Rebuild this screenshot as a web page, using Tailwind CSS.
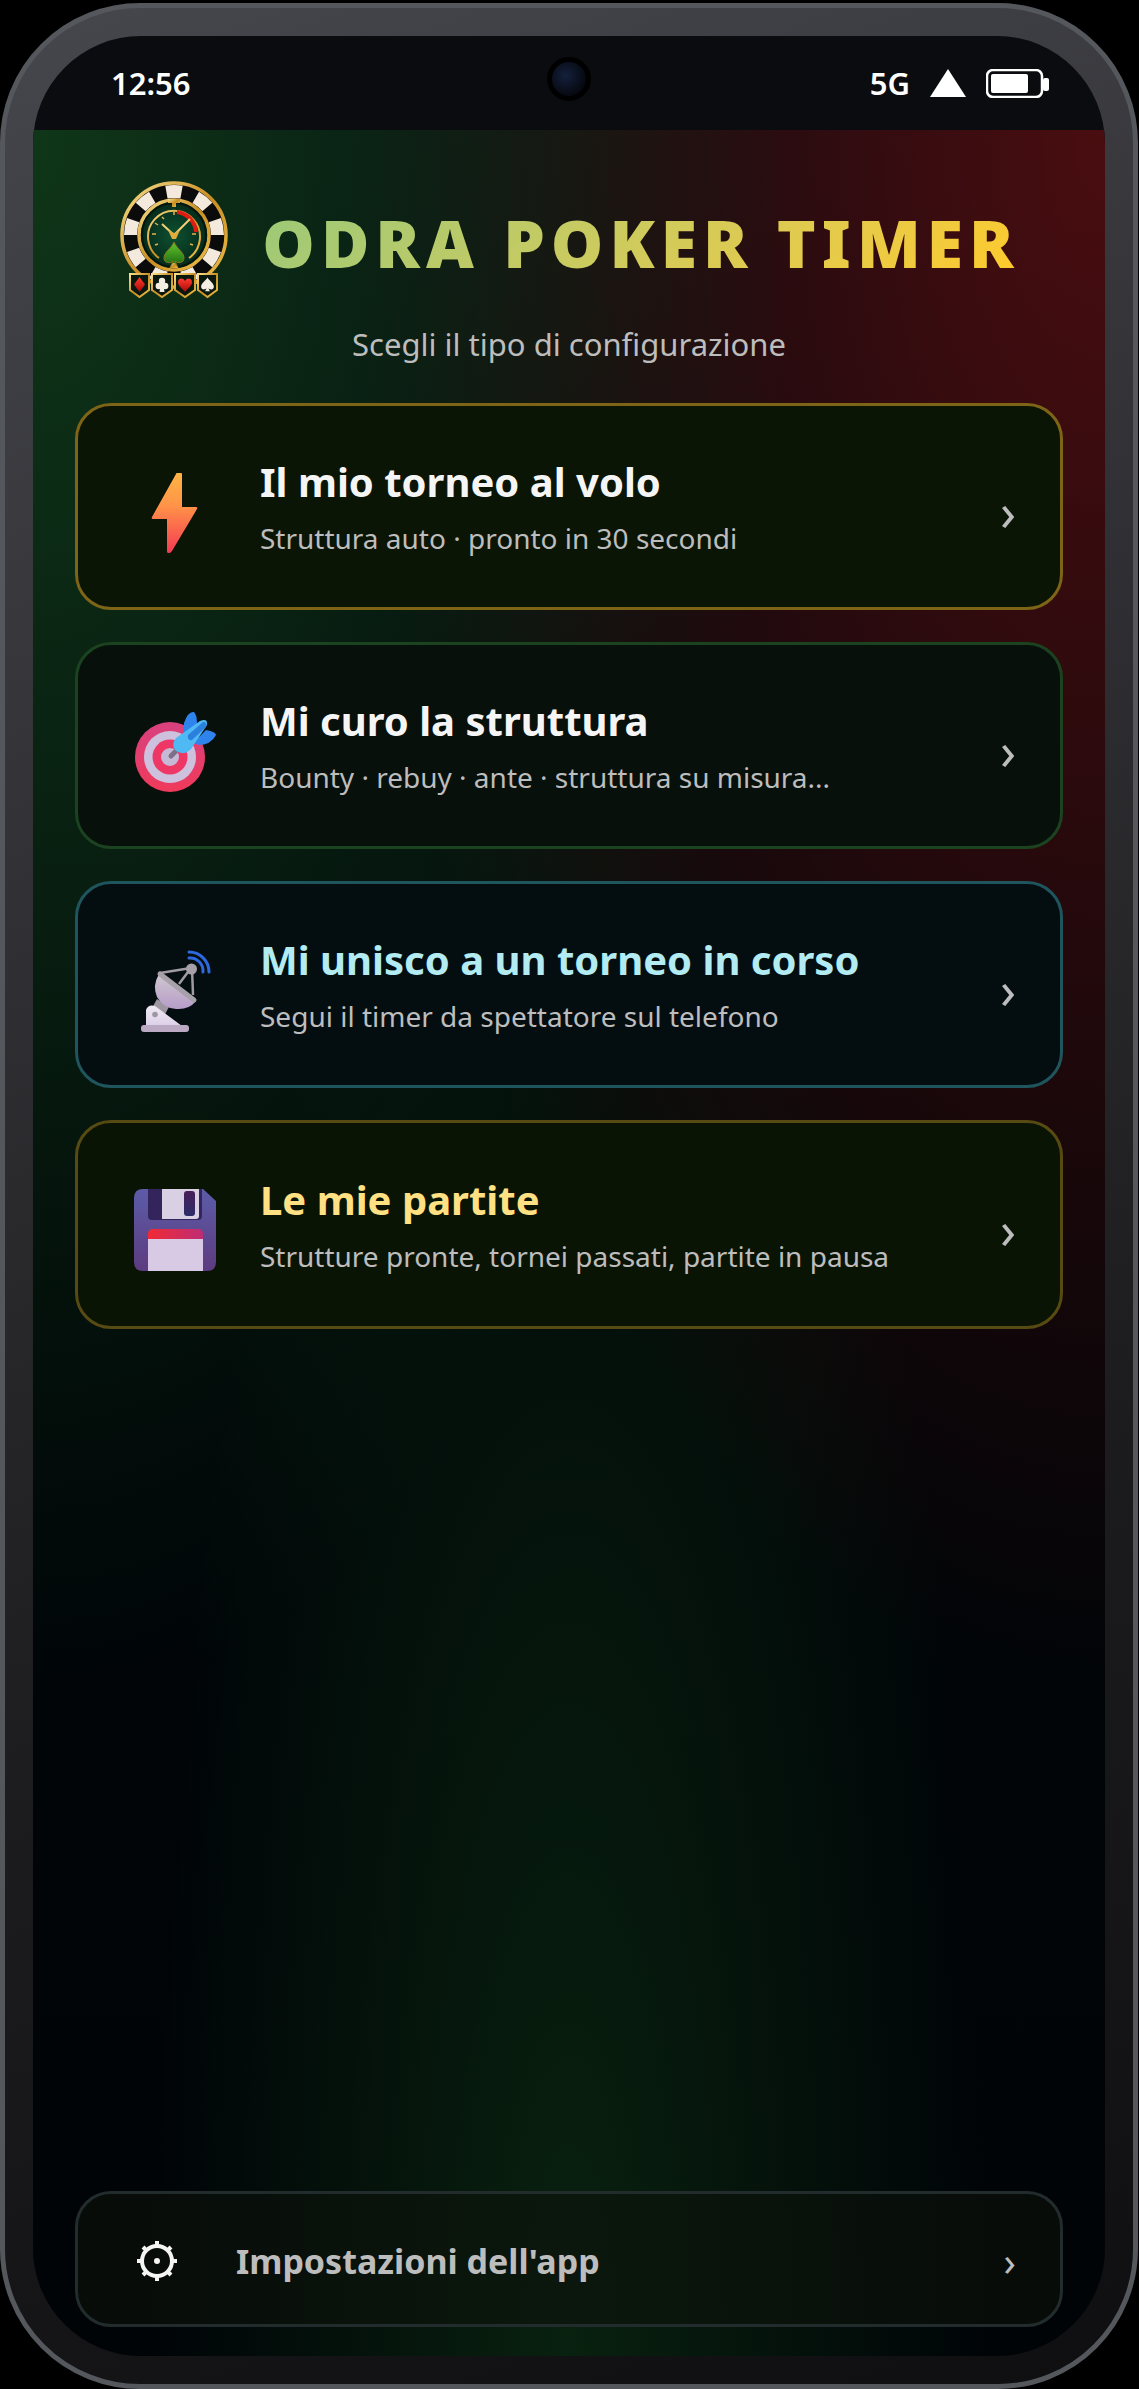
<!DOCTYPE html>
<html lang="it">
<head>
    <meta charset="UTF-8">
    <meta name="viewport" content="width=device-width, initial-scale=1.0">
    <title>Odra Poker Timer</title>
    <script src="https://cdn.jsdelivr.net/npm/@tailwindcss/browser@4"></script>
</head>
<body class="bg-black font-['Noto_Sans','Open_Sans',sans-serif] text-white">
    <div class="min-h-screen flex flex-col pt-[3px] pr-px">
        <!-- phone frame -->
        <div class="flex-1 flex flex-col border-[5px] border-[#54575c] rounded-[140px] bg-[linear-gradient(160deg,#45474c_0%,#3a3a3f_18%,#1c1c1e_65%,#0f0f11_100%)] p-7">
            <div class="flex-1 flex flex-col rounded-[108px] overflow-hidden bg-[#0a0c0f]">

                <!-- status bar -->
                <div class="relative h-[94px] shrink-0 flex items-center justify-between pl-[78px] pr-14 text-[31px] font-semibold">
                    <span>12:56</span>
                    <span class="absolute left-1/2 top-[21px] -translate-x-1/2 size-11 rounded-full border-[5px] border-black bg-[radial-gradient(circle_at_40%_40%,#14203c,#05070d_75%)]"></span>
                    <div class="flex items-center gap-5">
                        <span>5G</span>
                        <svg class="w-9 h-7" viewBox="0 0 36 28" fill="#fff"><path d="M18 0 36 28H0z"/></svg>
                        <svg class="w-[63px] h-[29px]" viewBox="0 0 63 29" fill="#fff">
                            <rect x="1" y="1" width="55" height="27" rx="6" fill="none" stroke="#fff" stroke-width="2.5"/>
                            <rect x="5" y="5" width="37" height="19" rx="2"/>
                            <rect x="57" y="9" width="6" height="13" rx="2"/>
                        </svg>
                    </div>
                </div>

                <main class="flex-1 flex flex-col px-[42px] pt-[49px] pb-[29px] bg-[radial-gradient(ellipse_at_0%_0%,rgba(27,94,32,0.53),transparent_50%),radial-gradient(ellipse_at_100%_0%,rgba(139,16,16,0.52),transparent_50%),radial-gradient(ellipse_at_50%_100%,rgba(27,94,32,0.32),transparent_55%),linear-gradient(180deg,#020a10,#000508_50%,#000407)]">
                    <header class="flex flex-col items-center">
                        <div class="flex items-center gap-8">
                            <svg class="w-[112px] h-[122px]" viewBox="0 0 112 122">
                                <defs>
                                    <linearGradient id="gold" x1="0" y1="0" x2="1" y2="1">
                                        <stop offset="0" stop-color="#f8df8c"/>
                                        <stop offset=".5" stop-color="#c98d22"/>
                                        <stop offset="1" stop-color="#f0bf4a"/>
                                    </linearGradient>
                                    <radialGradient id="felt"><stop offset="0" stop-color="#0d5030"/><stop offset="1" stop-color="#05281a"/></radialGradient>
                                    <linearGradient id="leaf" x1="0" y1="0" x2="0" y2="1"><stop offset="0" stop-color="#62c72c"/><stop offset="1" stop-color="#14600e"/></linearGradient>
                                    <linearGradient id="ruby" x1="0" y1="0" x2="0" y2="1"><stop offset="0" stop-color="#ff3a2c"/><stop offset="1" stop-color="#a80808"/></linearGradient>
                                    <path id="spade" d="M0-8C-2-4-8-1-8 3.500C-8 7-3.500 8-1 5L-3 9H3L1 5C3.500 8 8 7 8 3.500C8-1 2-4 0-8z"/>
                                </defs>
                                <circle cx="56" cy="56" r="52" fill="#0b0b0b" stroke="url(#gold)" stroke-width="3.500"/>
                                <circle cx="56" cy="56" r="43.500" fill="none" stroke="#f3e9dd" stroke-width="13" pathLength="360" stroke-dasharray="20 20" stroke-dashoffset="-20" transform="rotate(-120 56 56)"/>
                                <circle cx="56" cy="56" r="35" fill="url(#felt)" stroke="url(#gold)" stroke-width="3.500"/>
                                <circle cx="56" cy="56" r="32" fill="none" stroke="#04150d" stroke-width="2"/>
                                <path d="M50 20h12v4H50zM54 24h4v4h-4z" fill="url(#gold)"/>
                                <path d="M41 79A26 26 0 1 1 71 79" fill="none" stroke="url(#gold)" stroke-width="2"/>
                                <path d="M59 33A22 22 0 0 1 78 53" fill="none" stroke="#dd1c14" stroke-width="4"/>
                                <path d="M56 32v4M34 55h4M74 55h4M44 38l2 2M37 44l3 2M37 66l3-1M75 66l-3-1" stroke="#e3b14a" stroke-width="1.500"/>
                                <path d="M44 45 56 56 72 40" fill="none" stroke="#f1cf72" stroke-width="2"/>
                                <path d="M50 51 56 54 62 51 58 60H54z" fill="#e0ac3d"/>
                                <path d="M56 63C53 70 46 73 46 79C46 84 52 85 55 82L52 89H60L57 82C60 85 66 84 66 79C66 73 59 70 56 63z" fill="url(#leaf)" stroke="#8d7420"/>
                                <path d="M52 89h8l-3-5h-2z" fill="url(#gold)"/>
                                <g fill="#08180f" stroke="url(#gold)" stroke-width="2">
                                    <path d="M12 95h19v16l-9.500 7-9.500-7z"/>
                                    <path d="M34 95h20v16l-10 7-10-7z"/>
                                    <path d="M57 95h20v16l-10 7-10-7z"/>
                                    <path d="M80 95h19v16l-9.500 7-9.500-7z"/>
                                </g>
                                <path d="M21.500 98l5.500 7.500-5.500 7.500-5.500-7.500z" fill="url(#ruby)"/>
                                <g fill="#f5ece2"><circle cx="44" cy="102" r="3.200"/><circle cx="40.800" cy="107" r="3.200"/><circle cx="47.200" cy="107" r="3.200"/><path d="M43 104h2l1.500 9h-5z"/></g>
                                <path d="M67 113C64 109 60 107 60 103C60 99 65 98 67 102C69 98 74 99 74 103C74 107 70 109 67 113z" fill="url(#ruby)"/>
                                <use href="#spade" transform="translate(89.500 105) scale(.8)" fill="#f5ece2"/>
                            </svg>
                            <h1 class="pt-1 text-[66px] leading-[80px] font-black tracking-[6px] bg-linear-135 from-[#9ac978] to-[#ffca28] bg-clip-text text-transparent">ODRA POKER TIMER</h1>
                        </div>
                        <p class="mt-[22px] text-[31px] leading-[42px] text-[#bdbdbd]">Scegli il tipo di configurazione</p>
                    </header>

                    <nav class="mt-[38px] flex flex-col gap-8 text-left">
                        <button class="w-full min-h-[207px] flex items-center rounded-[36px] border-3 border-[#7d6416] bg-[#0a1505] pl-[54px] pr-11 text-left">
                            <svg class="size-[88px] shrink-0 mt-[10px]" viewBox="0 0 88 88">
                                <defs><linearGradient id="bolt" x1="0" y1="0" x2="0" y2="1"><stop offset="0" stop-color="#ffb545"/><stop offset=".4" stop-color="#ff9448"/><stop offset="1" stop-color="#f53a52"/></linearGradient></defs>
                                <path d="M45 5h4q1 0 1 1v33h14q2 0 1 2L40 83q-1 2-3 2h-1q-1 0-1-2V51H21q-2 0-1-2L44 6q0-1 1-1z" fill="url(#bolt)"/>
                            </svg>
                            <span class="ml-10 flex-1">
                                <span class="block text-[40px] leading-[56px] font-bold text-[#f5f5f5]">Il mio torneo al volo</span>
                                <span class="block mt-[6px] text-[28px] leading-[44px] text-[#bdbdbd]">Struttura auto · pronto in 30 secondi</span>
                            </span>
                            <span class="pt-2 text-[52px] text-[#bdbdbd]">›</span>
                        </button>

                        <button class="w-full min-h-[207px] flex items-center rounded-[36px] border-3 border-[#1b4320] bg-[#07100b] pl-[54px] pr-11 text-left">
                            <svg class="size-[88px] shrink-0 mt-[10px]" viewBox="0 0 88 88">
                                <defs><linearGradient id="ring" x1="0" y1="0" x2="0" y2="1"><stop offset="0" stop-color="#d8417f"/><stop offset="1" stop-color="#f03a5a"/></linearGradient></defs>
                                <circle cx="38" cy="50" r="35" fill="url(#ring)"/>
                                <circle cx="38" cy="50" r="26" fill="#cdc1de"/>
                                <circle cx="38" cy="50" r="17.500" fill="#ee3765"/>
                                <circle cx="38" cy="50" r="9" fill="#c6b9d6"/>
                                <path d="M39 49 46 42" stroke="#7c7088" stroke-width="5" stroke-linecap="round"/>
                                <path d="M52 27V16Q56 4 62 5Q65 8 65 17L60 30zM62 35 74 23Q84 25 84 28Q79 38 66 38z" fill="#2f83ec"/>
                                <path d="M44 31 68 14Q76 11 75 18L59 42Q51 50 43 43Q39 37 44 31z" fill="#4fb9f4"/>
                                <path d="M56 28 71 15Q76 15 74 20L60 33Q55 34 56 28z" fill="#2b80de"/>
                            </svg>
                            <span class="ml-10 flex-1">
                                <span class="block text-[40px] leading-[56px] font-bold text-[#f5f5f5]">Mi curo la struttura</span>
                                <span class="block mt-[6px] text-[28px] leading-[44px] text-[#bdbdbd]">Bounty · rebuy · ante · struttura su misura...</span>
                            </span>
                            <span class="pt-2 text-[52px] text-[#bdbdbd]">›</span>
                        </button>

                        <button class="w-full min-h-[207px] flex items-center rounded-[36px] border-3 border-[#1f555c] bg-[#040e11] pl-[54px] pr-11 text-left">
                            <svg class="size-[88px] shrink-0 mt-[10px]" viewBox="0 0 88 88">
                                <defs>
                                    <linearGradient id="dish" x1="0" y1="0" x2="0" y2="1"><stop offset="0" stop-color="#cfc8cf"/><stop offset="1" stop-color="#b79cc9"/></linearGradient>
                                    <linearGradient id="stand" x1="0" y1="0" x2="0" y2="1"><stop offset="0" stop-color="#f0eaf4"/><stop offset="1" stop-color="#dcd0e8"/></linearGradient>
                                </defs>
                                <path d="M28 27 59 22M59 22 47 38M60 22 61 49" stroke="#a09aa2" stroke-width="2.500"/>
                                <path d="M25 53 37 61 32 70 20 62z" fill="#9d97a1"/>
                                <path d="M27 28 64 55q-7 9-20 8-13-1-19-12-5-11 2-23z" fill="url(#dish)"/>
                                <path d="M28 28 62 54" stroke="#a7a1a9" stroke-width="5" stroke-linecap="round"/>
                                <circle cx="59.500" cy="23" r="5.500" fill="#a6a1a8"/>
                                <path d="M57 12A13 13 0 0 1 71 26M57 6A20 20 0 0 1 77 26" fill="none" stroke="#2d68de" stroke-width="3" stroke-linecap="round"/>
                                <path d="M14 80V64q2-6 9-4L50 80z" fill="url(#stand)"/>
                                <circle cx="23" cy="68.500" r="2.800" fill="#9c97a3"/>
                                <rect x="9" y="79" width="48" height="7" rx="3" fill="#bba9c4"/>
                            </svg>
                            <span class="ml-10 flex-1">
                                <span class="block text-[40px] leading-[56px] font-bold text-[#b2ebf2]">Mi unisco a un torneo in corso</span>
                                <span class="block mt-[6px] text-[28px] leading-[44px] text-[#bdbdbd]">Segui il timer da spettatore sul telefono</span>
                            </span>
                            <span class="pt-2 text-[52px] text-[#bdbdbd]">›</span>
                        </button>

                        <button class="w-full min-h-[209px] flex items-center rounded-[36px] border-3 border-[#574a12] bg-[#0a1405] pl-[54px] pr-11 text-left">
                            <svg class="size-[88px] shrink-0 mt-[10px]" viewBox="0 0 88 88">
                                <defs>
                                    <linearGradient id="disk" x1="0" y1="0" x2="0" y2="1"><stop offset="0" stop-color="#5c5ca8"/><stop offset="1" stop-color="#5d3b80"/></linearGradient>
                                    <linearGradient id="strip"><stop offset="0" stop-color="#f02a35"/><stop offset="1" stop-color="#bf2c74"/></linearGradient>
                                    <linearGradient id="hole" x1="0" y1="0" x2="0" y2="1"><stop offset="0" stop-color="#4a1f58"/><stop offset="1" stop-color="#2c2c68"/></linearGradient>
                                </defs>
                                <path d="M11 3h60l13 12v61q0 9-9 9H11q-9 0-9-9V12q0-9 9-9z" fill="url(#disk)"/>
                                <path d="M16 3h54v27q0 4-4 4H20q-4 0-4-4z" fill="#33245c"/>
                                <path d="M30 3h37v27q0 3-3 3H30z" fill="#d9d1e3"/>
                                <rect x="52" y="5" width="11" height="25" rx="3" fill="url(#hole)"/>
                                <path d="M16 53v-5q0-5 5-5h45q5 0 5 5v5z" fill="url(#strip)"/>
                                <path d="M16 53h55v32H16z" fill="#d8c9e5"/>
                            </svg>
                            <span class="ml-10 flex-1">
                                <span class="block text-[40px] leading-[56px] font-bold text-[#ffe082]">Le mie partite</span>
                                <span class="block mt-[6px] text-[28px] leading-[44px] text-[#bdbdbd]">Strutture pronte, tornei passati, partite in pausa</span>
                            </span>
                            <span class="pt-2 text-[52px] text-[#bdbdbd]">›</span>
                        </button>
                    </nav>

                    <button class="mt-auto w-full min-h-[136px] flex items-center rounded-[36px] border-3 border-[#222c2d] bg-[#0e120b]/60 pl-[54px] pr-11 pt-1 text-left">
                        <svg class="w-[50px] h-[50px] shrink-0" viewBox="0 0 50 50" fill="none" stroke="#f5f5f5">
                            <circle cx="25" cy="25" r="15" stroke-width="4"/>
                            <path d="M25 5v5M25 40v5M5 25h5M40 25h5M11 11l4 4M35 35l4 4M39 11l-4 4M15 35l-4 4" stroke-width="4"/>
                            <circle cx="25" cy="25" r="3" fill="#f5f5f5" stroke="none"/>
                        </svg>
                        <span class="ml-[54px] flex-1 text-[34px] font-bold text-[#bdbdbd]">Impostazioni dell'app</span>
                        <span class="text-[40px] text-[#bdbdbd]">›</span>
                    </button>
                </main>
            </div>
        </div>
    </div>
</body>
</html>
